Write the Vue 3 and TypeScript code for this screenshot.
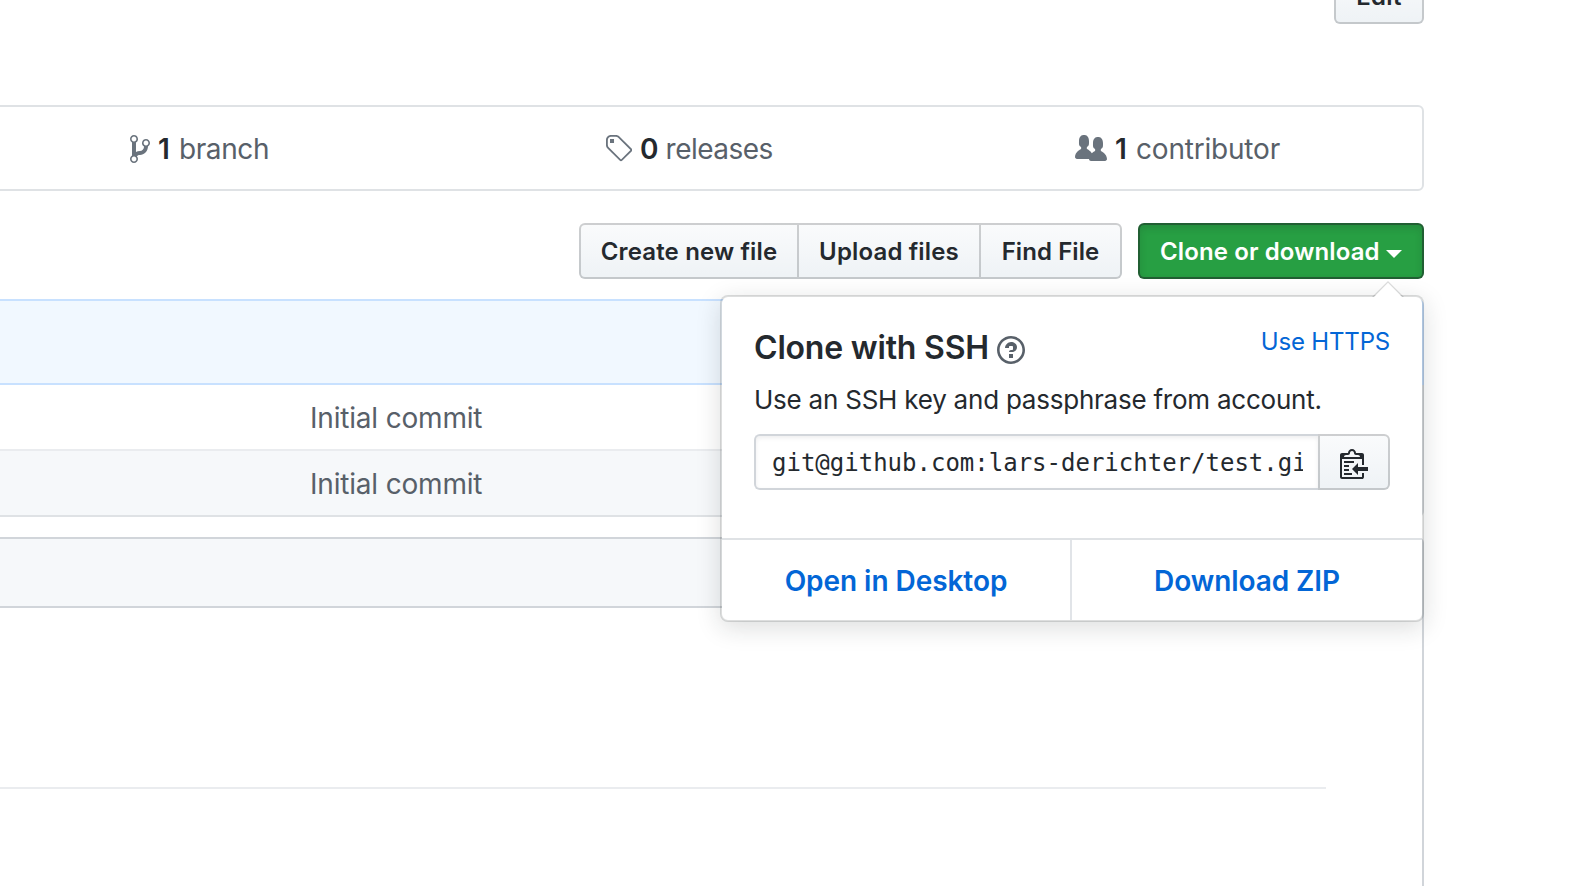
<script setup lang="ts">
import { ref } from 'vue'

interface Stat {
  count: number
  label: string
  width: number
  path: string
  cls: string
}

const stats: Stat[] = [
  {
    count: 1,
    label: 'branch',
    width: 10,
    cls: 'branch',
    path: 'M10 5c0-1.11-.89-2-2-2a1.993 1.993 0 0 0-1 3.72v.3c-.02.52-.23.98-.63 1.38-.4.4-.86.61-1.38.63-.83.02-1.48.16-2 .45V4.72a1.993 1.993 0 0 0-1-3.72C.88 1 0 1.89 0 3a2 2 0 0 0 1 1.72v6.56c-.59.35-1 .99-1 1.72 0 1.11.89 2 2 2 1.11 0 2-.89 2-2 0-.53-.2-1-.53-1.36.09-.06.48-.41.59-.47.25-.11.56-.17.94-.17 1.05-.05 1.95-.45 2.75-1.25S8.95 7.77 9 6.73h-.02C9.59 6.37 10 5.73 10 5zM2 1.8c.66 0 1.2.55 1.2 1.2 0 .65-.55 1.2-1.2 1.2C1.35 4.2.8 3.65.8 3c0-.65.55-1.2 1.2-1.2zm0 12.41c-.66 0-1.2-.55-1.2-1.2 0-.65.55-1.2 1.2-1.2.65 0 1.2.55 1.2 1.2 0 .65-.55 1.2-1.2 1.2zm6-8c-.66 0-1.2-.55-1.2-1.2 0-.65.55-1.2 1.2-1.2.65 0 1.2.55 1.2 1.2 0 .65-.55 1.2-1.2 1.2z',
  },
  {
    count: 0,
    label: 'releases',
    width: 14,
    cls: 'releases',
    path: 'M7.73 1.73C7.26 1.26 6.62 1 5.96 1H3.5C2.13 1 1 2.13 1 3.5v2.47c0 .66.27 1.3.73 1.77l6.06 6.06c.39.39 1.02.39 1.41 0l4.59-4.59a.996.996 0 0 0 0-1.41L7.73 1.73zM2.38 7.09c-.31-.3-.47-.7-.47-1.13V3.5c0-.88.72-1.59 1.59-1.59h2.47c.42 0 .83.16 1.13.47l6.14 6.13-4.73 4.73-6.13-6.15zM3.01 3h2v2H3V3h.01z',
  },
  {
    count: 1,
    label: 'contributor',
    width: 16,
    cls: 'contributor',
    path: 'M16 12.999c0 .439-.45 1-1 1H7.995c-.539 0-.994-.447-.995-.999H1c-.54 0-1-.561-1-1 0-2.634 3-4 3-4s.229-.409 0-1c-.841-.621-1.058-.59-1-3 .058-2.419 1.367-3 2.5-3s2.442.58 2.5 3c.058 2.41-.159 2.379-1 3-.229.59 0 1 0 1s1.549.711 2.42 2.088C9.196 9.369 10 8.999 10 8.999s.229-.409 0-1c-.841-.62-1.058-.59-1-3 .058-2.419 1.367-3 2.5-3s2.437.581 2.495 3c.059 2.41-.158 2.38-1 3-.229.59 0 1 0 1s3.005 1.366 3.005 4z',
  },
]

const commits: string[] = ['Initial commit', 'Initial commit']
const cloneUrl = 'git@github.com:lars-derichter/test.git'
const open = ref(true)
</script>

<template>
  <div class="page">
    <main class="repo">
      <header class="repo-head">
        <button class="btn edit" type="button">Edit</button>
      </header>

      <ul class="stats">
        <li v-for="s in stats" :key="s.label">
          <svg :width="s.width * 2" height="32" :viewBox="`0 0 ${s.width} 16`" aria-hidden="true">
            <path fill-rule="evenodd" :d="s.path" />
          </svg>
          <strong>{{ s.count }}</strong>
          <span :class="s.cls">{{ s.label }}</span>
        </li>
      </ul>

      <nav class="toolbar">
        <div class="group">
          <button class="btn create" type="button">Create new file</button>
          <button class="btn upload" type="button">Upload files</button>
          <button class="btn find" type="button">Find File</button>
        </div>
        <div class="clone">
          <button class="btn primary" type="button" @click="open = !open">
            <span>Clone or download</span>
            <i class="caret"></i>
          </button>

          <section v-if="open" class="popover">
            <svg class="pointer" width="32" height="16" viewBox="0 0 32 16" aria-hidden="true">
              <path class="pointer-edge" d="M0 16 16 0l16 16h-2L16 2 2 16z" />
              <path class="pointer-fill" d="M2 16 16 2l14 14z" />
            </svg>
            <div class="popover-body">
              <div class="popover-head">
                <h4>Clone with SSH</h4>
                <svg class="help" width="28" height="32" viewBox="0 0 14 16" aria-hidden="true">
                  <path
                    fill-rule="evenodd"
                    d="M6 10h2v2H6v-2zm4-3.5C10 8.64 8 9 8 9H6c0-.55.45-1 1-1h.5c.28 0 .5-.22.5-.5v-1c0-.28-.22-.5-.5-.5h-1c-.28 0-.5.22-.5.5V7H4c0-1.5 1.5-3 3-3s3 1 3 2.5zM7 2.3c3.14 0 5.7 2.56 5.7 5.7s-2.56 5.7-5.7 5.7A5.71 5.71 0 0 1 1.3 8c0-3.14 2.56-5.7 5.7-5.7zM7 1C3.14 1 0 4.14 0 8s3.14 7 7 7 7-3.14 7-7-3.14-7-7-7z"
                  />
                </svg>
                <a class="switch">Use HTTPS</a>
              </div>
              <p>Use an SSH key and passphrase from account.</p>
              <div class="url">
                <input type="text" readonly :value="cloneUrl" aria-label="Clone URL" />
                <button class="btn copy" type="button" aria-label="Copy">
                  <svg width="28" height="32" viewBox="0 0 14 16" aria-hidden="true">
                    <path
                      fill-rule="evenodd"
                      d="M2 13h4v1H2v-1zm5-6H2v1h5V7zm2 3V8l-3 3 3 3v-2h5v-2H9zM4.5 9H2v1h2.5V9zM2 12h2.5v-1H2v1zm9 1h1v2c-.02.28-.11.52-.3.7-.19.18-.42.28-.7.3H1c-.55 0-1-.45-1-1V4c0-.55.45-1 1-1h3c0-1.11.89-2 2-2 1.11 0 2 .89 2 2h3c.55 0 1 .45 1 1v5h-1V6H1v9h10v-2zM2 5h8c0-.55-.45-1-1-1H8c-.55 0-1-.45-1-1s-.45-1-1-1-1 .45-1 1-.45 1-1 1H3c-.55 0-1 .45-1 1z"
                    />
                  </svg>
                </button>
              </div>
            </div>
            <footer>
              <a class="desktop">Open in Desktop</a>
              <a class="zip">Download ZIP</a>
            </footer>
          </section>
        </div>
      </nav>

      <div class="tease"></div>
      <ul class="files">
        <li v-for="(c, i) in commits" :key="i">{{ c }}</li>
      </ul>

      <article class="readme">
        <div class="readme-head"></div>
        <div class="readme-title"></div>
      </article>
    </main>
  </div>
</template>

<style>
html,
body {
  background: #fff;
  overflow: hidden;
}
</style>

<style scoped>
* {
  box-sizing: border-box;
}
.page {
  width: 1588px;
  height: 886px;
  overflow: hidden;
  background: #fff;
  color: #24292e;
  font-family: Inter, 'Liberation Sans', sans-serif;
  font-size: 28px;
}
.repo {
  display: flex;
  flex-direction: column;
  width: 1424px;
  height: 886px;
}
ul,
p,
h4 {
  margin: 0;
  padding: 0;
  list-style: none;
}
svg {
  display: block;
  flex: none;
  fill: currentColor;
}
a {
  color: #0366d6;
}
.btn {
  display: flex;
  align-items: center;
  justify-content: center;
  height: 56px;
  margin: 0;
  padding: 2px 0 0;
  border: 2px solid rgba(27, 31, 35, 0.2);
  border-radius: 6px;
  background: #eff3f6 linear-gradient(180deg, #fafbfc, #eff3f6 90%) 0 -2px / 110% 110%;
  color: #24292e;
  font: 600 24px / 36px Inter, 'Liberation Sans', sans-serif;
  white-space: nowrap;
}

/* Heading and summary */
.repo-head {
  display: flex;
  flex: none;
  align-items: flex-end;
  justify-content: flex-end;
  height: 24px;
  margin-bottom: 81px;
}
.edit {
  flex: none;
  width: 90px;
  letter-spacing: 0.3px;
}
.stats {
  display: grid;
  flex: none;
  grid-template-columns: repeat(3, 1fr);
  height: 86px;
  margin: 0 0 32px -47px;
  border: 2px solid #dfe2e5;
  border-radius: 6px;
}
.stats li {
  display: flex;
  align-items: center;
  justify-content: center;
  padding-top: 2px;
  color: #586069;
  line-height: 36px;
}
.stats svg {
  fill: #6a737d;
}
.stats strong {
  min-width: 14px;
  margin: 0 7px 0 8px;
  color: #24292e;
  font-weight: 600;
}
.branch {
  letter-spacing: -0.39px;
}
.releases {
  letter-spacing: -0.51px;
}
.contributor {
  letter-spacing: -0.2px;
}

/* Toolbar */
.toolbar {
  display: flex;
  flex: none;
  gap: 16px;
  justify-content: flex-end;
  margin-bottom: 20px;
}
.group {
  display: flex;
}
.create {
  width: 218px;
  border-right: 0;
  border-radius: 6px 0 0 6px;
  letter-spacing: 0.16px;
}
.upload {
  width: 182px;
  border-right: 0;
  border-radius: 0;
  letter-spacing: 0.15px;
}
.find {
  width: 143px;
  border-radius: 0 6px 6px 0;
  letter-spacing: 0.08px;
}
.clone {
  position: relative;
}
.primary {
  justify-content: space-between;
  width: 286px;
  padding: 2px 20px 0;
  border-color: rgba(27, 31, 35, 0.5);
  background: #279f43;
  box-shadow: inset 0 3.6px 7.2px rgba(27, 31, 35, 0.15);
  color: #fff;
  letter-spacing: 0.12px;
}
.caret {
  margin-top: 3px;
  border: 8px solid transparent;
  border-top-color: #fff;
  border-bottom: 0;
}

/* Clone menu */
.popover {
  position: absolute;
  z-index: 10;
  top: 72px;
  right: 0;
  width: 704px;
  height: 327px;
  border: 2px solid rgba(27, 31, 35, 0.15);
  border-radius: 8px;
  background: #fff;
  background-clip: padding-box;
  box-shadow: 0 6px 24px rgba(27, 31, 35, 0.15);
}
.pointer {
  position: absolute;
  top: -16px;
  right: 18px;
}
.pointer-edge {
  fill: rgba(27, 31, 35, 0.15);
}
.pointer-fill {
  fill: #fff;
}
.popover-body {
  height: 241px;
  padding: 27px 32px 0;
}
.popover-head {
  display: flex;
  align-items: flex-start;
}
h4 {
  font-size: 32px;
  font-weight: 600;
  line-height: 48px;
  letter-spacing: -0.2px;
}
.help {
  margin: 10px 0 0 8px;
  fill: #586069;
}
.switch {
  margin-left: auto;
  font-size: 24px;
  line-height: 36px;
  letter-spacing: -0.18px;
}
.popover p {
  margin: 8px 0 15px;
  font-size: 26px;
  line-height: 39px;
  letter-spacing: -0.23px;
  white-space: nowrap;
}
.url {
  display: flex;
}
.url input {
  flex: 1;
  min-width: 0;
  height: 56px;
  margin: 0;
  padding: 2px 15px 0 16px;
  border: 2px solid #d1d5da;
  border-right: 0;
  border-radius: 6px 0 0 6px;
  outline: 0;
  background: #fff;
  box-shadow: inset 0 2px 4px rgba(27, 31, 35, 0.075);
  color: #24292e;
  font: 24px 'DejaVu Sans Mono', 'Liberation Mono', monospace;
}
.copy {
  width: 72px;
  border-radius: 0 6px 6px 0;
}
footer {
  display: flex;
  height: 82px;
  border-top: 2px solid #dfe2e5;
}
footer a {
  flex: 1;
  padding-top: 2px;
  font-weight: 600;
  line-height: 78px;
  text-align: center;
}
footer .desktop {
  flex: 0 0 350px;
  border-right: 2px solid #e1e4e8;
  letter-spacing: -0.05px;
}
.zip {
  letter-spacing: -0.07px;
}

/* File list */
.tease {
  flex: none;
  height: 86px;
  margin-left: -10px;
  border: 2px solid #c8e1ff;
  border-radius: 6px 6px 0 0;
  background: #f1f8ff;
}
.files {
  flex: none;
  margin: 0 0 20px -10px;
  border: 2px solid #dfe2e5;
  border-top: 0;
  border-radius: 0 0 6px 6px;
}
.files li {
  height: 64px;
  padding-left: 318px;
  color: #586069;
  line-height: 66px;
  letter-spacing: -0.19px;
}
.files li + li {
  height: 66px;
  border-top: 2px solid #eaecef;
  background: #f6f8fa;
}

/* Readme */
.readme {
  flex: none;
  height: 400px;
  margin-left: -10px;
  border: 2px solid #d1d5da;
  border-radius: 6px;
}
.readme-head {
  height: 69px;
  border-bottom: 2px solid #d1d5da;
  border-radius: 4px 4px 0 0;
  background: #f6f8fa;
}
.readme-title {
  height: 181px;
  margin-right: 96px;
  border-bottom: 2px solid #eaecef;
}
</style>
